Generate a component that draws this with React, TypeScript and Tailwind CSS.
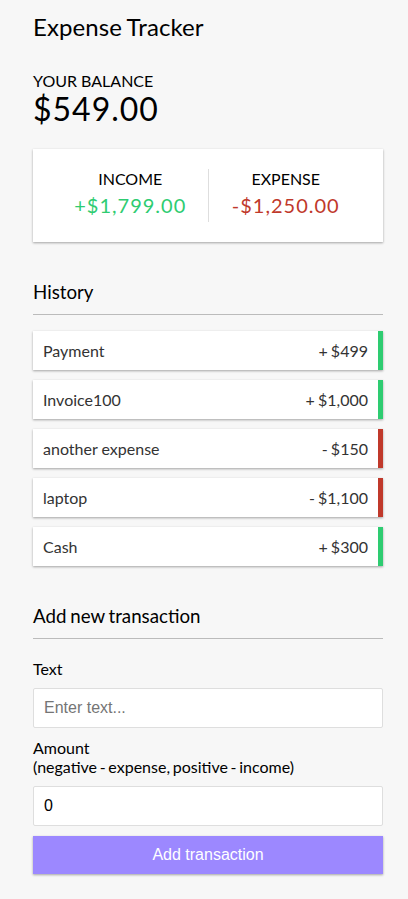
import { useState } from 'react';

interface Transaction {
  id: number;
  text: string;
  amount: number;
}

const initialTransactions: Transaction[] = [
  { id: 1, text: 'Payment', amount: 499 },
  { id: 2, text: 'Invoice100', amount: 1000 },
  { id: 3, text: 'another expense', amount: -150 },
  { id: 4, text: 'laptop', amount: -1100 },
  { id: 5, text: 'Cash', amount: 300 },
];

const shadow = 'shadow-[0_1px_3px_rgba(0,0,0,0.12),0_1px_2px_rgba(0,0,0,0.24)]';

const fmt = (n: number) => n.toLocaleString('en-US');

export default function App() {
  const [transactions, setTransactions] = useState<Transaction[]>(initialTransactions);
  const [text, setText] = useState('');
  const [amount, setAmount] = useState('0');

  const amounts = transactions.map(t => t.amount);
  const total = amounts.reduce((acc, a) => acc + a, 0);
  const income = amounts.filter(a => a > 0).reduce((acc, a) => acc + a, 0);
  const expense = amounts.filter(a => a < 0).reduce((acc, a) => acc + a, 0) * -1;

  const money = (n: number) =>
    n.toLocaleString('en-US', { minimumFractionDigits: 2, maximumFractionDigits: 2 });

  const handleSubmit = (e: React.FormEvent) => {
    e.preventDefault();
    if (!text.trim()) return;
    setTransactions(prev => [...prev, { id: Date.now(), text, amount: Number(amount) }]);
    setText('');
    setAmount('0');
  };

  return (
    <div className="min-h-screen bg-[#f7f7f7] font-['Lato',sans-serif] text-black pb-[20px]">
      <div className="ml-[33px] w-[350px] pt-[12.5px]">
        {/* Header */}
        <h2 className="text-[24px] leading-[1.2] font-normal tracking-[0.1px] [word-spacing:-1px]">Expense Tracker</h2>

        {/* Balance */}
        <h4 className="mt-[30px] text-[16px] leading-[1.2] uppercase font-normal">Your Balance</h4>
        <h1 className="text-[32px] leading-[1.2] tracking-[1px] font-normal">${money(total)}</h1>

        {/* Income / expense */}
        <div className={`mt-[20px] flex bg-white p-[20px] ${shadow}`}>
          <div className="flex-1 text-center border-r border-[#dedede]">
            <h4 className="text-[16px] leading-[1.2] uppercase font-normal">Income</h4>
            <p className="my-[5px] text-[20px] leading-[1.2] tracking-[1px] text-[#2ecc71]">+${money(income)}</p>
          </div>
          <div className="flex-1 text-center">
            <h4 className="text-[16px] leading-[1.2] uppercase font-normal">Expense</h4>
            <p className="my-[5px] text-[20px] leading-[1.2] tracking-[1px] text-[#c0392b]">-${money(expense)}</p>
          </div>
        </div>

        {/* History */}
        <h3 className="mt-[39px] pb-[10px] border-b border-[#bbb] text-[18.72px] leading-[1.2] font-normal">History</h3>
        <ul className="mt-[16px] flex flex-col gap-[10px]">
          {transactions.map(t => (
            <li
              key={t.id}
              className={`flex justify-between bg-white p-[10px] text-[16px] leading-[1.2] text-[#333] border-r-[5px] ${
                t.amount < 0 ? 'border-[#c0392b]' : 'border-[#2ecc71]'
              } ${shadow}`}
            >
              <span>{t.text}</span>
              <span className="[word-spacing:-1px]">
                {t.amount < 0 ? '-' : '+'} ${fmt(Math.abs(t.amount))}
              </span>
            </li>
          ))}
        </ul>

        {/* Add transaction */}
        <h3 className="mt-[39px] pb-[10px] border-b border-[#bbb] text-[18.72px] leading-[1.2] font-normal [word-spacing:-1px]">
          Add new transaction
        </h3>
        <form onSubmit={handleSubmit}>
          <div>
            <label htmlFor="text" className="inline-block mt-[20px] mb-[10px] text-[16px] leading-[1.2]">
              Text
            </label>
            <input
              id="text"
              type="text"
              value={text}
              onChange={e => setText(e.target.value)}
              placeholder="Enter text..."
              className="block w-full bg-white border border-[#dedede] rounded-[2px] p-[10px] text-[16px] leading-[18px] font-['Liberation_Sans',Arial,sans-serif] placeholder:text-[#757575] outline-none"
            />
          </div>
          <div>
            <label htmlFor="amount" className="inline-block my-[10px] text-[16px] leading-[1.2] [word-spacing:-1.4px]">
              Amount <br />
              (negative - expense, positive - income)
            </label>
            <input
              id="amount"
              type="number"
              value={amount}
              onChange={e => setAmount(e.target.value)}
              placeholder="Enter amount..."
              className="block w-full bg-white border border-[#dedede] rounded-[2px] p-[10px] text-[16px] leading-[18px] font-['Liberation_Sans',Arial,sans-serif] outline-none"
            />
          </div>
          <button
            type="submit"
            className={`mt-[10px] block w-full bg-[#9c88ff] p-[10px] text-[16px] leading-[18px] text-white font-['Liberation_Sans',Arial,sans-serif] cursor-pointer ${shadow}`}
          >
            Add transaction
          </button>
        </form>
      </div>
    </div>
  );
}
